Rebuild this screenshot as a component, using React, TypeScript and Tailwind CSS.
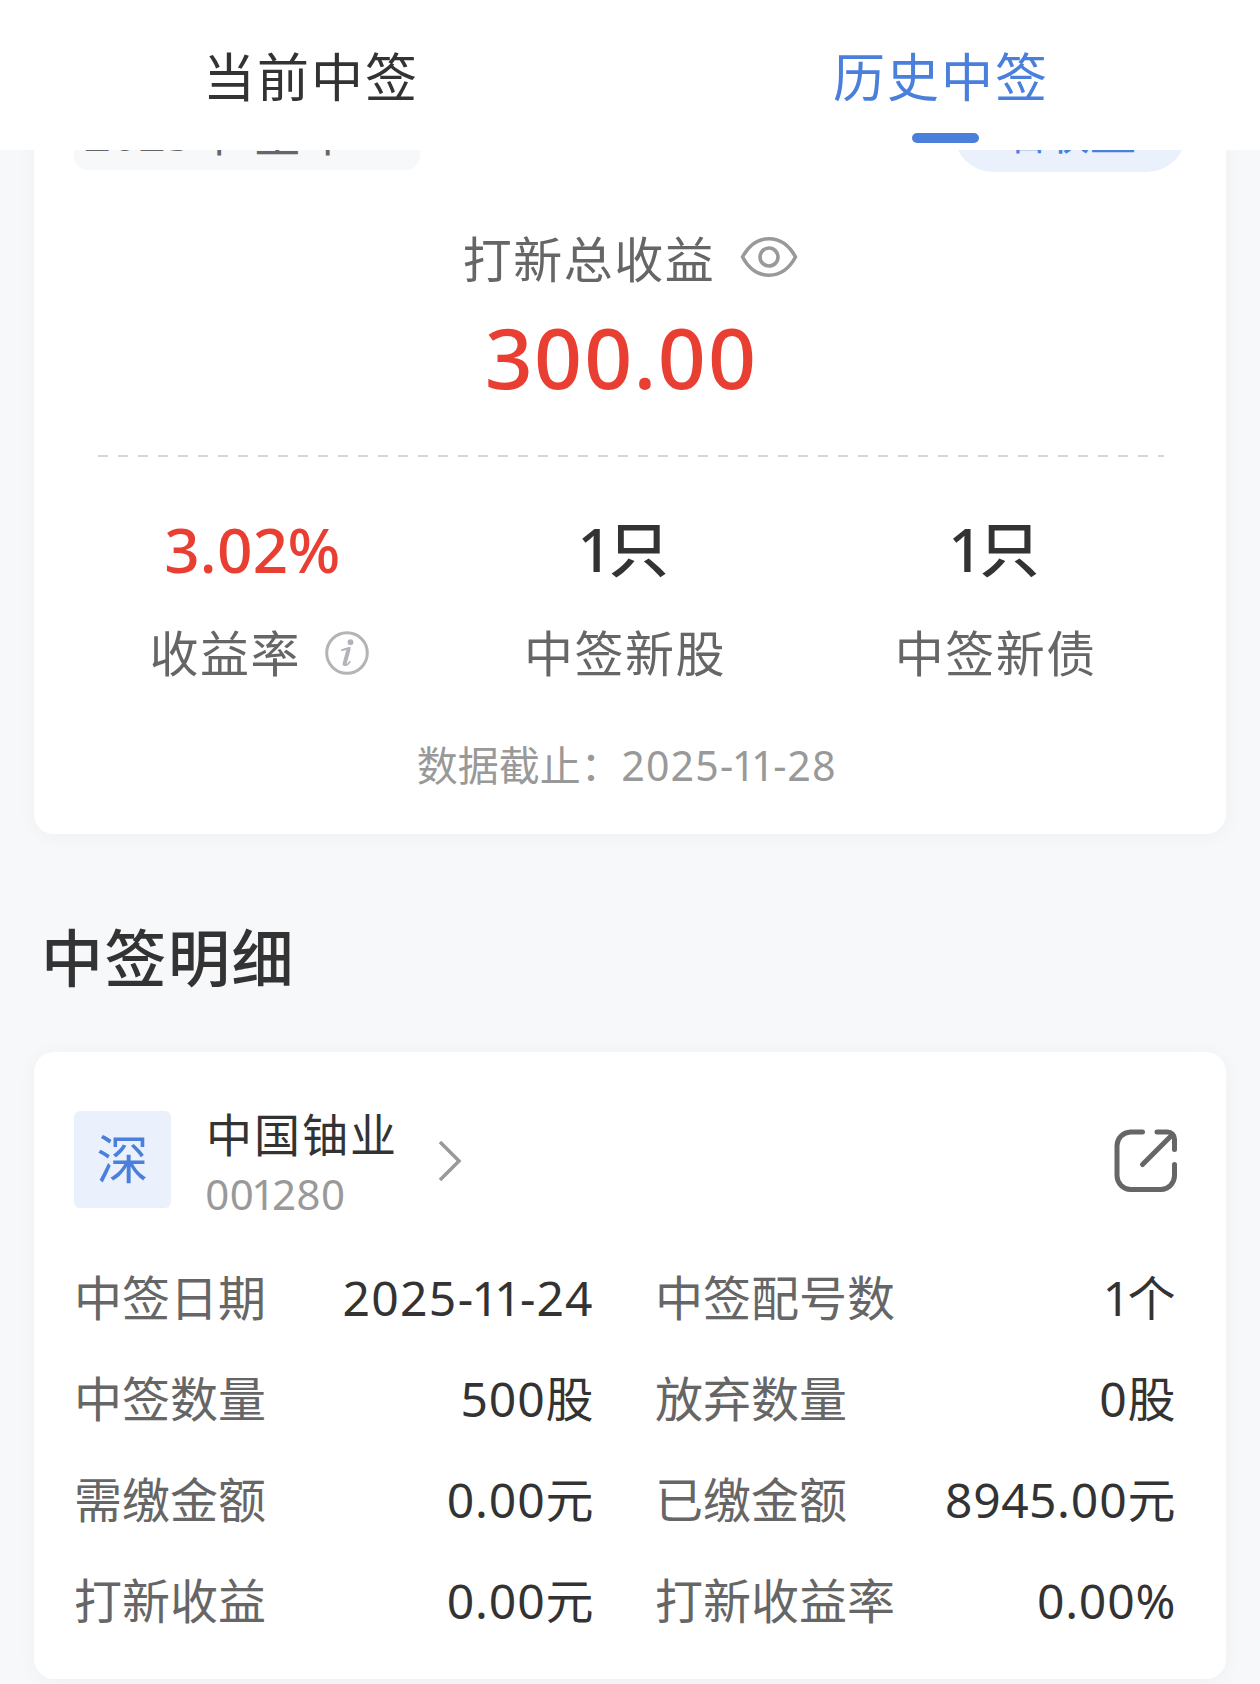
import { clsx } from 'clsx';

type Stat = { value: string; label: string; highlight?: boolean; info?: boolean };

const stats: Stat[] = [
  { value: '3.02%', label: '收益率', highlight: true, info: true },
  { value: '1只', label: '中签新股' },
  { value: '1只', label: '中签新债' },
];

const details = [
  ['中签日期', '2025-11-24', '中签配号数', '1个'],
  ['中签数量', '500股', '放弃数量', '0股'],
  ['需缴金额', '0.00元', '已缴金额', '8945.00元'],
  ['打新收益', '0.00元', '打新收益率', '0.00%'],
];

function EyeIcon() {
  return (
    <svg className="mb-1" width="58" height="42" viewBox="0 0 58 42" fill="none" stroke="#999" strokeWidth="3.6">
      <path d="M2.500 21C9 9 18 2.800 29 2.800S49 9 55.500 21C49 33 40 39.200 29 39.200S9 33 2.500 21Z" strokeLinejoin="round" />
      <circle cx="29" cy="21" r="9" />
    </svg>
  );
}

function InfoIcon() {
  return (
    <svg width="44" height="44" viewBox="0 0 44 44" fill="none">
      <circle cx="22" cy="22" r="20.3" stroke="#b2b4b8" strokeWidth="3" />
      <circle cx="25.500" cy="11.200" r="2.900" fill="#b2b4b8" />
      <path d="M17 19.200C19.500 18.200 21.500 17.600 24.500 17L20.300 31.500C19.800 33.400 20 34.300 21 34.200C22.200 34 23.600 32.600 24.800 31" stroke="#b2b4b8" strokeWidth="1.800" strokeLinecap="round" />
      <path d="M23.500 18.500L19.500 33" stroke="#b2b4b8" strokeWidth="4" strokeLinecap="round" />
    </svg>
  );
}

function ShareIcon() {
  return (
    <svg width="64" height="64" viewBox="0 0 64 64" fill="none" stroke="#666" strokeWidth="5" strokeLinecap="round" strokeLinejoin="round">
      <path d="M28.500 3H16.500A14 14 0 0 0 3 16.500V47A14 14 0 0 0 16.500 60.500H47A14 14 0 0 0 60.500 47V35.500" />
      <path d="M43 3H53.500A7 7 0 0 1 60.500 10V20.500" />
      <path d="M28.500 35.500L58 6" />
    </svg>
  );
}

export default function App() {
  return (
    <div className="flex h-[1684px] w-[1260px] flex-col overflow-hidden bg-[#f7f8fa] font-['Noto_Sans','Noto_Sans_CJK_SC',sans-serif] text-[#333] proportional-nums">
      <header className="relative z-10 flex h-[150px] shrink-0 bg-white text-[52px] leading-[60px] tracking-[2px]">
        <div className="flex flex-1 flex-col items-center pt-[47px]">
          <span className="pr-2">当前中签</span>
        </div>
        <div className="flex flex-1 flex-col items-center pt-[47px] text-[#4a7fdb]">
          <span className="pr-2">历史中签</span>
          <i className="mt-[26px] h-2.5 w-[67px] rounded-full bg-[#4a7fdb]" />
        </div>
      </header>

      <main className="flex flex-col px-[34px]">
        {/* Summary card, scrolled partly under the tab bar */}
        <section className="-mt-[56px] flex h-[740px] shrink-0 flex-col rounded-[20px] bg-white px-10 shadow-[0_2px_20px_rgba(0,0,0,0.04)]">
          <div className="flex h-[78px] shrink-0 justify-between">
            <div className="h-[76px] w-[346px] rounded-[14px] bg-[#f7f8fa] pt-4 pl-2.5 text-[48px] leading-[46px] text-[#666]">
              2025年 全年
            </div>
            <div className="flex h-[78px] w-[232px] justify-center rounded-full bg-[#eaf1fc] pt-[13px] pr-1.5 text-[46px] leading-[48px] text-[#4a7fdb]">
              晒收益
            </div>
          </div>

          <div className="mt-[59px] flex h-14 items-center justify-center gap-[25px] pl-px text-[49px] leading-[56px] tracking-[1.500px] text-[#666]">
            打新总收益
            <EyeIcon />
          </div>
          <div className="mt-[27px] h-[86px] pr-[18px] text-center text-[84px] leading-[86px] font-medium tracking-[0.600px] text-[#e93f33]">
            300.00
          </div>

          <svg className="mt-[55px] ml-6 h-0.5 w-[1066px] shrink-0" viewBox="0 0 1066 2">
            <path d="M0 1H1066" stroke="#d6d7da" strokeWidth="2" strokeDasharray="10 10" />
          </svg>

          <div className="mt-[54px] grid grid-cols-3">
            {stats.map((stat) => (
              <div key={stat.label} className={clsx('flex flex-col items-center', !stat.info && 'pr-2.5')}>
                <div className={clsx('leading-[76px] font-medium', stat.highlight ? 'pr-3.5 text-[62px] text-[#e93f33]' : 'text-[60px]')}>
                  {stat.value}
                </div>
                <div className="mt-[38px] flex h-14 items-center gap-6 text-[49px] leading-[56px] tracking-[1.500px] text-[#666]">
                  {stat.label}
                  {stat.info && <InfoIcon />}
                </div>
              </div>
            ))}
          </div>

          <div className="mt-[59px] pr-1.5 text-center text-[41px] leading-[50px] text-[#999]">
            数据截止：<span className="tracking-[1.300px]">2025-11-28</span>
          </div>
        </section>

        <h2 className="mt-[86px] pl-[7px] text-[62px] leading-[76px] font-medium tracking-[1.500px]">中签明细</h2>

        <section className="mt-[56px] flex h-[627px] shrink-0 flex-col rounded-[20px] bg-white px-10 shadow-[0_2px_20px_rgba(0,0,0,0.04)]">
          <div className="mt-[59px] flex h-[97px] items-center">
            <div className="flex h-[97px] w-[97px] justify-center rounded-md bg-[#eaf1fc] text-[52px] leading-[95px] text-[#4a7fdb]">深</div>
            <div className="ml-[34px] flex flex-col pt-2">
              <span className="pl-px text-[46px] leading-[60px] tracking-[2px]">中国铀业</span>
              <span className="text-[42px] leading-[60px] text-[#999]">001280</span>
            </div>
            <svg className="mt-0.5 ml-10 h-[42px] w-6" viewBox="0 0 24 42" fill="none" stroke="#999" strokeWidth="3.500">
              <path d="M2 2L21 21L2 40" />
            </svg>
            <button className="mr-2 ml-auto pt-0.5">
              <ShareIcon />
            </button>
          </div>

          <div className="mt-[39px] flex flex-col">
            {details.map(([label, value, otherLabel, otherValue]) => (
              <div key={label} className="flex h-[101px] items-center text-[48px] leading-[101px] whitespace-nowrap">
                <div className="flex w-[520px] justify-between">
                  <span className="text-[#666]">{label}</span>
                  <span className={value.includes('-') ? 'tracking-[1.500px]' : 'tracking-[0.500px]'}>{value}</span>
                </div>
                <div className="ml-[61px] flex w-[521px] justify-between">
                  <span className="text-[#666]">{otherLabel}</span>
                  <span className="tracking-[0.500px]">{otherValue}</span>
                </div>
              </div>
            ))}
          </div>
        </section>
      </main>
    </div>
  );
}
